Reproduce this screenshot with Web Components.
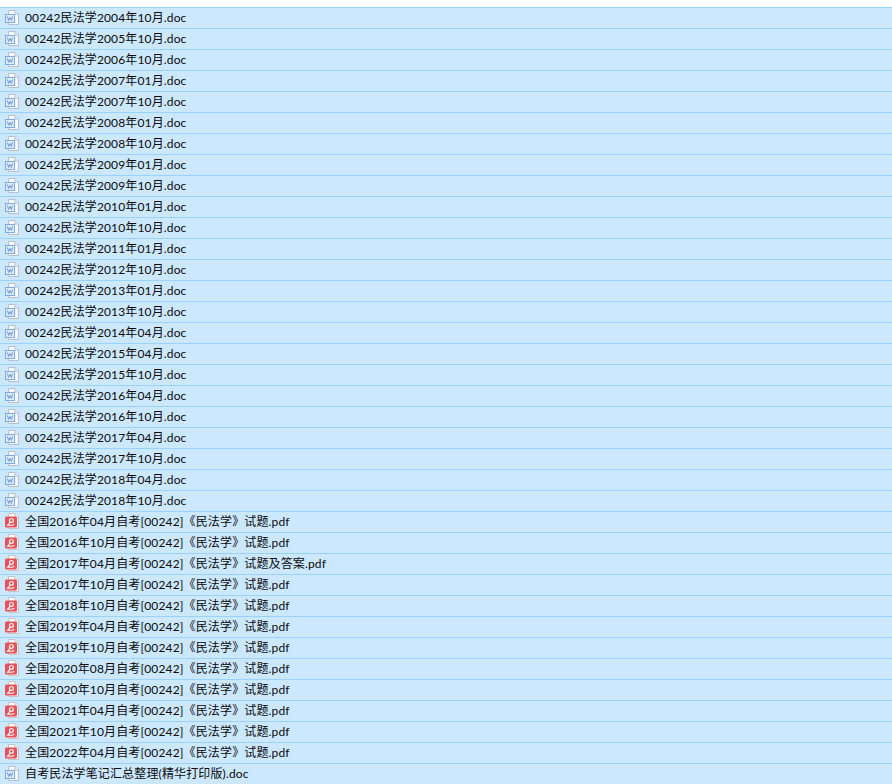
<!DOCTYPE html>
<html lang="zh">
<head>
<meta charset="utf-8">
<title>files</title>
<style>
    html, body { margin: 0; padding: 0; background: #fff; overflow: hidden; }
</style>
</head>
<body>
<file-list></file-list>
<script>
const ICONS = {
    doc: `<svg width="16" height="16" viewBox="0 0 16 16">
        <path d="M4.5 1.5H11L14.5 5V15.5H4.5Z" fill="#f6f9fd" stroke="#b4bfcf"/>
        <path d="M11 1.5V5H14.5" fill="#e8eef6" stroke="#b4bfcf"/>
        <rect x="1.5" y="5.5" width="9" height="8" fill="#dfecfb" stroke="#7fa9e2"/>
        <path d="M3.4 7.4L4.6 11.5L6 8.4L7.4 11.5L8.6 7.4" fill="none" stroke="#6a9ade"/>
    </svg>`,
    pdf: `<svg width="16" height="16" viewBox="0 0 16 16">
        <path d="M4.5 .5H11L14.5 4V15.5H4.5Z" fill="#fbfbfb" stroke="#c4c4c4"/>
        <path d="M11 .5V4H14.5" fill="#f0f0f0" stroke="#c4c4c4"/>
        <rect x="1" y="3.5" width="12" height="11" rx="1.5" fill="#ea5058"/>
        <circle cx="7.4" cy="7.4" r="1.9" fill="none" stroke="#fff" stroke-width="1.2"/>
        <path d="M6 9C5.6 10.4 4.6 11.4 3.6 12.2C5.5 12.4 8 12.2 10.4 11.4" fill="none" stroke="#fff" stroke-width="1.1"/>
    </svg>`
};

class FileRow extends HTMLElement {
    constructor() {
        super();
        this.attachShadow({ mode: "open" });
    }

    connectedCallback() {
        const type = this.getAttribute("type") || "doc";
        this.shadowRoot.innerHTML = `
            <style>
                :host {
                    display: flex;
                    align-items: center;
                    gap: 5px;
                    height: 20px;
                    padding-left: 4px;
                    background: #cce8ff;
                    border-bottom: 1px solid #99d1ff;
                    font: 12px/18px Lato, "Noto Sans CJK SC", sans-serif;
                    letter-spacing: .14px;
                    color: #0a0a0a;
                    white-space: nowrap;
                }
                svg { display: block; flex: none; margin-bottom: 2px; }
                span { display: block; }
            </style>
            ${ICONS[type]}
            <span><slot></slot></span>
        `;
    }
}

class FileList extends HTMLElement {
    constructor() {
        super();
        this.attachShadow({ mode: "open" });
        this.files = [];
        const dates = ["2004年10月", "2005年10月", "2006年10月", "2007年01月", "2007年10月", "2008年01月",
            "2008年10月", "2009年01月", "2009年10月", "2010年01月", "2010年10月", "2011年01月", "2012年10月",
            "2013年01月", "2013年10月", "2014年04月", "2015年04月", "2015年10月", "2016年04月", "2016年10月",
            "2017年04月", "2017年10月", "2018年04月", "2018年10月"];
        dates.map(d => this.files.push(`00242民法学${d}.doc`));
        const exams = [["2016年04月"], ["2016年10月"], ["2017年04月", "及答案"], ["2017年10月"], ["2018年10月"],
            ["2019年04月"], ["2019年10月"], ["2020年08月"], ["2020年10月"], ["2021年04月"], ["2021年10月"], ["2022年04月"]];
        exams.map(e => this.files.push(`全国${e[0]}自考[00242]《民法学》试题${e[1] || ""}.pdf`));
        this.files.push("自考民法学笔记汇总整理(精华打印版).doc");
    }

    connectedCallback() {
        this.shadowRoot.innerHTML = `
            <style>
                :host {
                    display: block;
                    margin-top: 7px;
                    border-top: 1px solid #99d1ff;
                }
            </style>
            ${this.files.map(name => `
                <file-row type="${name.endsWith(".pdf") ? "pdf" : "doc"}">${name}</file-row>
            `).join('')}
        `;
    }
}

customElements.define("file-row", FileRow);
customElements.define("file-list", FileList);
</script>
</body>
</html>
